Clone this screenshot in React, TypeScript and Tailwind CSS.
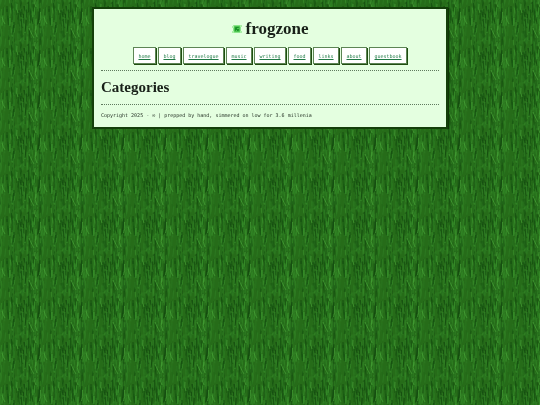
const pages = ["home", "blog", "travelogue", "music", "writing", "food", "links", "about", "guestbook"];

const TILE = 42;
const greens = ["#165410", "#2b7a20", "#328a26", "#10460c", "#1f6917", "#38932b", "#1a5c12", "#2c7c20", "#124a0d"];

function makeBlades() {
  let seed = 4021;
  const next = () => {
    seed = (seed * 16807) % 2147483647;
    return seed / 2147483647;
  };
  const blades: { d: string; color: string; width: number; opacity: number }[] = [];
  for (let i = 0; i < 170; i++) {
    const x = next() * TILE;
    const y = next() * TILE;
    const h = 5 + next() * 8;
    const lean = (next() - 0.5) * 3;
    const color = greens[Math.floor(next() * greens.length)];
    const width = 0.8 + next() * 0.9;
    const opacity = 0.4 + next() * 0.4;
    for (const dx of [-TILE, 0, TILE]) {
      for (const dy of [-TILE, 0, TILE]) {
        blades.push({
          d: `M${x + dx} ${y + dy}q${lean * 0.2} ${h * 0.6} ${lean} ${h}`,
          color,
          width,
          opacity,
        });
      }
    }
  }
  return blades;
}

const blades = makeBlades();

function Grass() {
  return (
    <svg className="fixed inset-0 -z-10 h-full w-full" aria-hidden="true">
      <defs>
        <pattern id="grass" width={TILE} height={TILE} patternUnits="userSpaceOnUse">
          <rect width={TILE} height={TILE} fill="#266c19" />
          {blades.map((b, i) => (
            <path key={i} d={b.d} stroke={b.color} strokeWidth={b.width} opacity={b.opacity} fill="none" />
          ))}
          <path d="M39.5 0V42" stroke="#124b0e" strokeWidth="1" opacity="0.4" />
          <path
            d="M36 26q-2 6 1 11M40.5 12q1 7 -1 11M29 28q2 5 5 10M17 4q-1 5 1 9M2 17q1 4 3 7M35 0q-1 4 1 7"
            stroke="#4aa638"
            strokeWidth="1"
            opacity="0.6"
            fill="none"
          />
          <path d="M33 17q-1 4 0 7M25 33v7M7 6v6M14 22v6M21 12v5" stroke="#0b3c08" strokeWidth="1.2" opacity="0.5" fill="none" />
        </pattern>
      </defs>
      <rect width="100%" height="100%" fill="url(#grass)" />
    </svg>
  );
}

function Clover() {
  return (
    <svg className="size-[10px]" viewBox="0 0 10 10" aria-hidden="true">
      <rect x="1" y="1" width="8" height="8" rx="1" fill="#8be58b" />
      <path d="M0 2h2v2H0zM8 1h2v2H8zM0 7h2v2H0zM8 7h2v2H8z" fill="#a9f0a6" />
      <rect x="2" y="2" width="6" height="6" rx="1" fill="#4cc44f" />
      <rect x="3" y="3" width="4" height="4" rx="1" fill="#189326" />
      <path d="M5 4h2v1H5zM4 6h1v1H4z" fill="#56c558" />
    </svg>
  );
}

export default function App() {
  return (
    <div className="px-2 pt-[7px] font-['DejaVu_Sans_Mono',monospace] text-[5px] leading-[8px] text-[#263326]">
      <Grass />
      <div className="mx-auto max-w-[356px] border-2 border-[#143f0a] bg-[#e4ffe0] px-[7px] pb-2 shadow-[1px_1px_1px_#103507]">
        <header>
          <h1 className="flex items-center justify-center gap-1 pt-2 font-['Liberation_Serif',serif] text-[17px] leading-6 font-bold text-[#182018]">
            <Clover />
            frogzone
          </h1>
          <nav className="mt-[6px] flex gap-[2px] px-8">
            {pages.map((page) => (
              <a
                key={page}
                href={`#${page}`}
                className="flex-auto border border-[#5d8555] bg-white pt-1 pb-[3px] text-center text-[#1f7a45] underline shadow-[1px_1px_0_#1f4d10]"
              >
                {page}
              </a>
            ))}
          </nav>
        </header>
        <hr className="mt-[6px] border-dotted border-[#5f7a5e]" />
        <main>
          <h2 className="py-[6px] font-['Liberation_Serif',serif] text-[15px] leading-[21px] font-bold text-[#182018]">Categories</h2>
        </main>
        <hr className="border-dotted border-[#5f7a5e]" />
        <footer className="mt-[6px]">
          <p>Copyright 2025 - ∞ | prepped by hand, simmered on low for 3.6 millenia</p>
        </footer>
      </div>
    </div>
  );
}
